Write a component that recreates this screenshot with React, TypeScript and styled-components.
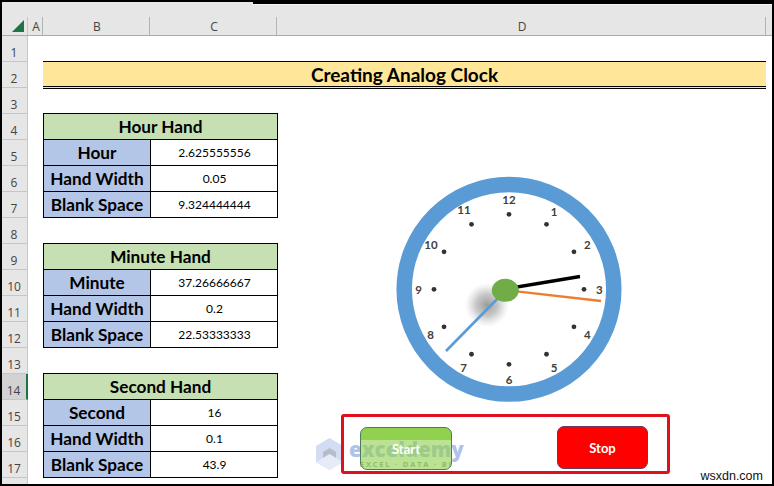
import React from "react";
import styled, { createGlobalStyle } from "styled-components";

const Global = createGlobalStyle`
  html, body { margin: 0; padding: 0; background: #000; }
  * { box-sizing: border-box; }
`;

const Frame = styled.div`
  position: relative;
  width: 774px;
  height: 486px;
  padding: 2px;
  background: #000;
  overflow: hidden;
  font-family: Lato, "Liberation Sans", sans-serif;
  color: #000;
`;

const Window = styled.div`
  width: 770px;
  height: 482px;
  background: #fff;
  display: flex;
  flex-direction: column;
  overflow: hidden;
`;

const TopEdge = styled.div`
  position: absolute;
  left: 253px;
  top: 2px;
  right: 2px;
  height: 3px;
  background: #000;
  border-bottom: 1px solid #f4f4f4;
`;

const ColumnBar = styled.div`
  flex: none;
  height: 34px;
  display: flex;
  align-items: flex-end;
  background: #e6e6e6;
  border-bottom: 1px solid #ababab;
`;

const Corner = styled.div`
  flex: none;
  width: 26px;
  height: 18px;
  position: relative;
  border-right: 1px solid #c8c8c8;
  &::after {
    content: "";
    position: absolute;
    right: 3px;
    bottom: 3px;
    border-style: solid;
    border-width: 0 0 12px 12px;
    border-color: transparent transparent #217346 transparent;
  }
`;

const ColumnCell = styled.div<{ $w: number }>`
  flex: none;
  width: ${(p) => p.$w}px;
  height: 18px;
  display: flex;
  align-items: center;
  justify-content: center;
  padding-left: 2px;
  border-right: 1px solid #b4b4b4;
  color: #444;
  font-size: 12px;
  font-family: "Open Sans", sans-serif;
`;

const Body = styled.div`
  flex: 1;
  display: flex;
  min-height: 0;
`;

const RowBar = styled.div`
  flex: none;
  width: 26px;
  display: flex;
  flex-direction: column;
  background: #e6e6e6;
  border-right: 1px solid #c8c8c8;
`;

const RowCell = styled.div<{ $active?: boolean }>`
  flex: none;
  width: 26px;
  height: 26px;
  display: flex;
  align-items: center;
  justify-content: center;
  padding-top: 7px;
  padding-right: 1px;
  font-size: 12px;
  font-family: "Open Sans", sans-serif;
  color: #444;
  background: ${(p) => (p.$active ? "#d2d2d2" : "#e6e6e6")};
  border-bottom: 1px solid #c6c6c6;
  border-right: ${(p) => (p.$active ? "2px solid #217346" : "1px solid #c8c8c8")};
`;

const Sheet = styled.div`
  flex: 1;
  display: grid;
  grid-template-columns: 234px 489px;
  grid-template-rows: repeat(18, 26px);
  margin-top: -1px;
  padding-left: 15px;
  align-content: start;
`;

const TitleBar = styled.div`
  grid-column: 1 / 3;
  grid-row: 2;
  height: 28px;
  display: flex;
  align-items: center;
  justify-content: center;
  background: #ffe699;
  border-top: 1px solid #000;
  border-bottom: 3px double #000;
  font-size: 19px;
  font-weight: 700;
`;

const HandTable = styled.table<{ $row: number }>`
  grid-column: 1;
  grid-row: ${(p) => p.$row} / span 4;
  width: 235px;
  height: 105px;
  border-collapse: collapse;
  table-layout: fixed;
`;

const LabelColumn = styled.col`
  width: 107px;
`;

const HeadCell = styled.th`
  height: 26px;
  padding: 0;
  background: #c6e0b4;
  border: 1px solid #000;
  font-size: 17.2px;
  font-weight: 700;
`;

const LabelCell = styled.th`
  height: 26px;
  padding: 0;
  background: #b4c6e7;
  border: 1px solid #000;
  font-size: 17.2px;
  font-weight: 700;
  white-space: nowrap;
`;

const ValueCell = styled.td`
  height: 26px;
  padding: 0 0 0 1px;
  text-align: center;
  background: #fff;
  border: 1px solid #000;
  font-size: 12px;
`;

const ClockArt = styled.svg`
  position: absolute;
  left: 390px;
  top: 170px;
  width: 240px;
  height: 240px;
`;

const Numeral = styled.text`
  font-family: Lato, sans-serif;
  font-size: 11.5px;
  font-weight: 700;
  fill: #404040;
  text-anchor: middle;
  dominant-baseline: central;
`;

const ControlPanel = styled.div`
  position: absolute;
  left: 341px;
  top: 414px;
  width: 329px;
  height: 60px;
  border: 3px solid #e0101c;
  border-radius: 3px;
  padding: 9px 19px 0 16px;
  display: flex;
  justify-content: space-between;
  align-items: flex-start;
`;

const ClockButton = styled.div<{ $kind: "start" | "stop" }>`
  width: ${(p) => (p.$kind === "start" ? 92 : 91)}px;
  height: 43px;
  margin-top: ${(p) => (p.$kind === "start" ? 1 : 0)}px;
  display: flex;
  align-items: center;
  justify-content: center;
  border-radius: 7px;
  border: 1px solid ${(p) => (p.$kind === "start" ? "#4f7a5c" : "#6b3a5a")};
  background: ${(p) =>
    p.$kind === "start"
      ? "linear-gradient(#92d050 0 12px, rgba(146, 208, 80, 0.62) 12px)"
      : "#ff0000"};
  color: #fff;
  font-size: 13px;
  font-weight: 700;
`;

const Watermark = styled.div`
  position: absolute;
  left: 316px;
  top: 438px;
  display: flex;
  align-items: center;
  gap: 6px;
  opacity: 0.62;
`;

const WatermarkText = styled.div`
  display: flex;
  flex-direction: column;
  align-items: center;
`;

const WatermarkName = styled.span`
  font-family: "Open Sans", sans-serif;
  font-size: 20.5px;
  font-weight: 800;
  line-height: 21px;
  color: #7f9ee4;
`;

const WatermarkTag = styled.span`
  font-family: "Open Sans", sans-serif;
  font-size: 7.5px;
  font-weight: 700;
  line-height: 9px;
  letter-spacing: 1.8px;
  color: #3f5f48;
`;

const Credit = styled.div`
  position: absolute;
  right: 11px;
  bottom: 3px;
  font-family: "Liberation Sans", sans-serif;
  font-size: 12.5px;
  line-height: 14px;
  color: #111;
`;

const columns: [string, number][] = [
  ["A", 15],
  ["B", 107],
  ["C", 127],
  ["D", 489],
];

const tables = [
  { row: 4, title: "Hour Hand", rows: [["Hour", "2.625555556"], ["Hand Width", "0.05"], ["Blank Space", "9.324444444"]] },
  { row: 9, title: "Minute Hand", rows: [["Minute", "37.26666667"], ["Hand Width", "0.2"], ["Blank Space", "22.53333333"]] },
  { row: 14, title: "Second Hand", rows: [["Second", "16"], ["Hand Width", "0.1"], ["Blank Space", "43.9"]] },
];

const CX = 509;
const CY = 289.3;

const numerals: [string, number, number][] = [
  ["12", 357, 88], ["1", 492, 124], ["2", 592, 223], ["3", 628, 357],
  ["4", 592, 492], ["5", 492, 591], ["6", 357, 627], ["7", 221, 591],
  ["8", 122, 492], ["9", 86, 357], ["10", 123, 223], ["11", 222, 118],
];

const Clock = () => (
  <ClockArt viewBox="390 170 240 240">
    <defs>
      <radialGradient id="blob">
        <stop offset="0%" stopColor="#8a8a8a" stopOpacity="0.85" />
        <stop offset="50%" stopColor="#9a9a9a" stopOpacity="0.55" />
        <stop offset="100%" stopColor="#bbb" stopOpacity="0" />
      </radialGradient>
    </defs>
    <circle cx={CX} cy={CY} r={104.8} fill="#fff" stroke="#5b9bd5" strokeWidth={15.5} />
    {Array.from({ length: 12 }, (_, i) => {
      const a = (i * Math.PI) / 6;
      return <circle key={i} cx={CX + 75 * Math.sin(a)} cy={CY - 75 * Math.cos(a)} r={2.4} fill="#333" />;
    })}
    {numerals.map(([n, x, y]) => (
      <Numeral key={n} x={390 + x / 3} y={170 + y / 3}>{n}</Numeral>
    ))}
    <ellipse cx={487} cy={305} rx={22} ry={22} fill="url(#blob)" />
    <line x1={505} y1={291} x2={446} y2={351} stroke="#5b9bd5" strokeWidth={2.6} />
    <line x1={505} y1={289} x2={580} y2={276.5} stroke="#000" strokeWidth={3.4} />
    <line x1={505} y1={290} x2={601} y2={301} stroke="#ed7d31" strokeWidth={2.4} />
    <ellipse cx={505.3} cy={290.3} rx={13.5} ry={11.5} fill="#70ad47" />
  </ClockArt>
);

export default function App() {
  return (
    <>
      <Global />
      <Frame>
        <Window>
          <ColumnBar>
            <Corner />
            {columns.map(([c, w]) => (
              <ColumnCell key={c} $w={w}>{c}</ColumnCell>
            ))}
          </ColumnBar>
          <Body>
            <RowBar>
              {Array.from({ length: 17 }, (_, i) => (
                <RowCell key={i} $active={i === 13}>{i + 1}</RowCell>
              ))}
            </RowBar>
            <Sheet>
              <TitleBar>Creating Analog Clock</TitleBar>
              {tables.map((t) => (
                <HandTable key={t.title} $row={t.row}>
                  <colgroup>
                    <LabelColumn />
                    <col />
                  </colgroup>
                  <thead>
                    <tr><HeadCell colSpan={2}>{t.title}</HeadCell></tr>
                  </thead>
                  <tbody>
                    {t.rows.map(([l, v]) => (
                      <tr key={l}>
                        <LabelCell>{l}</LabelCell>
                        <ValueCell>{v}</ValueCell>
                      </tr>
                    ))}
                  </tbody>
                </HandTable>
              ))}
            </Sheet>
          </Body>
        </Window>
        <TopEdge />
        <Clock />
        <Watermark>
          <svg width="27" height="32" viewBox="0 0 27 32">
            <path d="M13.5 0 27 8v16l-13.5 8L0 24V8z" fill="#b8c8ec" />
            <path d="M13.5 10 20 14v8l-6.5 4L7 22v-8z" fill="#8a94a8" />
            <path d="M0 24l13.5-8L27 24l-13.5 8z" fill="#d6dff4" />
          </svg>
          <WatermarkText>
            <WatermarkName>exceldemy</WatermarkName>
            <WatermarkTag>EXCEL · DATA · BI</WatermarkTag>
          </WatermarkText>
        </Watermark>
        <ControlPanel>
          <ClockButton $kind="start">Start</ClockButton>
          <ClockButton $kind="stop">Stop</ClockButton>
        </ControlPanel>
        <Credit>wsxdn.com</Credit>
      </Frame>
    </>
  );
}
